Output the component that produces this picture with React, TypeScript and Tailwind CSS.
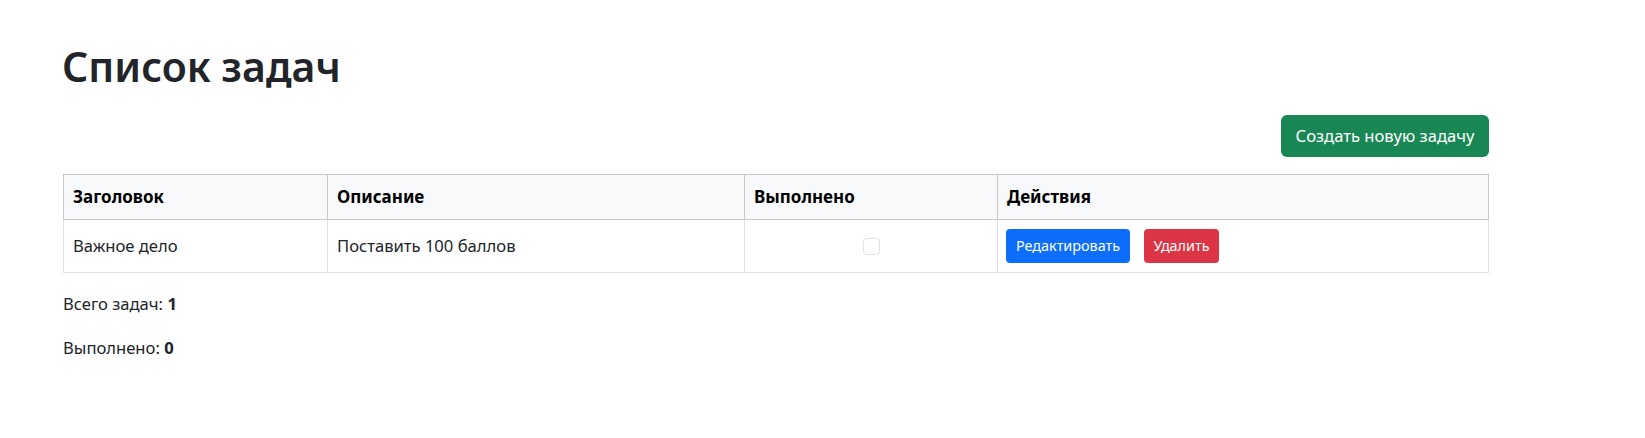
const font = { fontFamily: '"Segoe UI", "Noto Sans", "Open Sans", sans-serif' }

const tasks = [{ id: 1, title: 'Важное дело', description: 'Поставить 100 баллов', done: false }]

export default function App() {
  const doneCount = tasks.filter((t) => t.done).length

  return (
    <div className="min-h-screen bg-white text-[#212529]" style={font}>
      <div className="ml-[63px] w-[1426px] pt-[40px]">
        <h1 className="text-[41px] leading-[52px] font-semibold mb-[23px] ml-[-1px]">Список задач</h1>

        <div className="flex justify-end mb-[17px]">
          <button className="h-[42px] w-[208px] rounded-[6px] bg-[#198754] text-white text-[16.6px] leading-[26px]">
            Создать новую задачу
          </button>
        </div>

        <table className="w-full border-collapse text-[16.6px] leading-[26px] mb-[18px]">
          <thead>
            <tr className="bg-[#f8f9fa] text-black h-[45px]">
              <th className="w-[264px] border border-[#c6c7c8] px-[9px] text-left font-bold text-[17px]">Заголовок</th>
              <th className="w-[417px] border border-[#c6c7c8] px-[9px] text-left font-bold text-[17px]">Описание</th>
              <th className="w-[253px] border border-[#c6c7c8] px-[9px] text-left font-bold text-[17px]">Выполнено</th>
              <th className="border border-[#c6c7c8] px-[9px] text-left font-bold text-[17px]">Действия</th>
            </tr>
          </thead>
          <tbody>
            {tasks.map((task) => (
              <tr key={task.id} className="h-[53px]">
                <td className="border border-[#dee2e6] border-t-[#c6c7c8] px-[9px] align-middle">{task.title}</td>
                <td className="border border-[#dee2e6] border-t-[#c6c7c8] px-[9px] align-middle">{task.description}</td>
                <td className="border border-[#dee2e6] border-t-[#c6c7c8] px-[9px] align-middle">
                  <div className="flex justify-center">
                    <span className="block w-[17px] h-[17px] rounded-[4px] border border-[#dee2e6] bg-white" />
                  </div>
                </td>
                <td className="border border-[#dee2e6] border-t-[#c6c7c8] px-[8px] align-middle">
                  <div className="flex gap-[14px]">
                    <button className="h-[34px] w-[124px] rounded-[4px] bg-[#0d6efd] text-white text-[14.4px]">
                      Редактировать
                    </button>
                    <button className="h-[34px] w-[75px] rounded-[4px] bg-[#dc3545] text-white text-[14.4px]">
                      Удалить
                    </button>
                  </div>
                </td>
              </tr>
            ))}
          </tbody>
        </table>

        <p className="text-[16.6px] leading-[26px] mb-[18px]">
          Всего задач: <strong className="font-bold">{tasks.length}</strong>
        </p>
        <p className="text-[16.6px] leading-[26px]">
          Выполнено: <strong className="font-bold">{doneCount}</strong>
        </p>
      </div>
    </div>
  )
}
